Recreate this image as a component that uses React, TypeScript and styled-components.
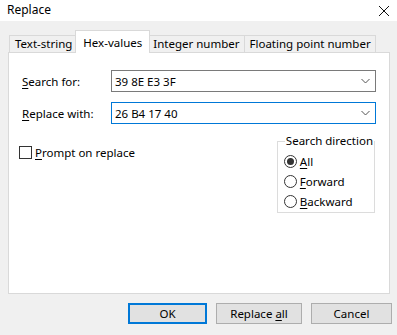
import React from 'react'
import styled, { createGlobalStyle } from 'styled-components'

const GlobalStyle = createGlobalStyle`
  html, body {
    margin: 0;
    padding: 0;
    background: #f0f0f0;
  }
  body {
    font-family: "Noto Sans", "Liberation Sans", sans-serif;
    font-size: 11.5px;
    color: #000;
  }
`

const tabs = ['Text-string', 'Hex-values', 'Integer number', 'Floating point number']

const Window = styled.div`
    width: 397px;
    height: 335px;
    display: flex;
    flex-direction: column;
    background: #f0f0f0;
    overflow: hidden;
`

const TitleBar = styled.div`
    height: 21px;
    background: #fff;
    display: flex;
    align-items: center;
    justify-content: space-between;
    padding: 0 7px 0 7px;
    box-sizing: border-box;
`

const Title = styled.span`
    font-size: 12px;
    line-height: 21px;
    margin-top: -2px;
`

const Body = styled.div`
    flex: 1;
    display: flex;
    flex-direction: column;
    padding: 10px 5px 10px 8px;
`

const TabStrip = styled.div`
    display: flex;
    align-items: flex-end;
    height: 22px;
    padding-left: 1px;
    position: relative;
    z-index: 1;
`

const Tab = styled.div<{ $active?: boolean }>`
    height: ${p => p.$active ? '23px' : '18px'};
    box-sizing: border-box;
    padding: ${p => p.$active ? '2px 7px 0 7px' : '0 4px 0 5px'};
    margin: ${p => p.$active ? '0 -2px 0 -2px' : '0 0 0 -1px'};
    border: 1px solid #d9d9d9;
    border-bottom: ${p => p.$active ? 'none' : '1px solid #d9d9d9'};
    background: ${p => p.$active ? '#fff' : '#f0f0f0'};
    position: relative;
    z-index: ${p => p.$active ? 2 : 1};
    display: flex;
    align-items: center;
    line-height: 16px;
    white-space: nowrap;
    &:first-child { margin-left: 0; }
`

const Panel = styled.div`
    width: 382px;
    height: 242px;
    box-sizing: border-box;
    background: #fff;
    border: 1px solid #d9d9d9;
    margin-top: -1px;
    padding: 17px 13px 0 13px;
    display: flex;
    flex-direction: column;
`

const FieldRow = styled.div`
    display: flex;
    align-items: center;
    height: 22px;
    margin-bottom: 10px;
`

const FieldLabel = styled.label`
    width: 89px;
    flex-shrink: 0;
`

const Combo = styled.div<{ $focused?: boolean }>`
    width: 265px;
    height: 22px;
    box-sizing: border-box;
    border: 1px solid ${p => p.$focused ? '#0078d7' : '#7a7a7a'};
    display: flex;
    align-items: center;
    justify-content: space-between;
    padding: 0 5px 0 3px;
    background: #fff;
`

const Key = styled.span`
    text-decoration: underline;
    text-underline-offset: 2px;
`

const Lower = styled.div`
    display: flex;
    justify-content: space-between;
    align-items: flex-start;
`

const CheckRow = styled.label`
    display: flex;
    align-items: center;
    height: 14px;
    margin-top: 11px;
    margin-left: -3px;
`

const CheckBox = styled.span`
    width: 13px;
    height: 13px;
    box-sizing: border-box;
    border: 1px solid #333;
    margin-right: 3px;
    background: #fff;
`

const Group = styled.fieldset`
    width: 96px;
    box-sizing: border-box;
    margin: 0 1px 0 0;
    padding: 5px 0 3px 6px;
    border: 1px solid #dcdcdc;
    display: flex;
    flex-direction: column;
    gap: 4px;
`

const Legend = styled.legend`
    padding: 0 1px;
    margin-left: 1px;
    line-height: 14px;
    white-space: nowrap;
`

const RadioRow = styled.label`
    display: flex;
    align-items: center;
    height: 16px;
`

const RadioCircle = styled.span<{ $checked?: boolean }>`
    width: 13px;
    height: 13px;
    box-sizing: border-box;
    border: 1px solid #333;
    border-radius: 50%;
    margin-right: 3px;
    display: flex;
    align-items: center;
    justify-content: center;
    &::after {
        content: '';
        display: ${p => p.$checked ? 'block' : 'none'};
        width: 7px;
        height: 7px;
        border-radius: 50%;
        background: #333;
    }
`

const ButtonRow = styled.div`
    display: flex;
    justify-content: flex-end;
    gap: 9px;
    margin-top: 9px;
`

const Button = styled.button<{ $primary?: boolean; $w: number }>`
    width: ${p => p.$w}px;
    height: 21px;
    box-sizing: border-box;
    font-family: inherit;
    font-size: 11.5px;
    color: #000;
    background: #e1e1e1;
    border: ${p => p.$primary ? '2px solid #0078d7' : '1px solid #adadad'};
    padding: 0;
    line-height: 16px;
`

const Chevron = () => (
    <svg width="9" height="6" viewBox="0 0 9 6">
        <path d="M0.5 1 L4.5 5 L8.5 1" fill="none" stroke="#555" strokeWidth="1" />
    </svg>
)

const CloseIcon = () => (
    <svg width="12" height="12" viewBox="0 0 12 12">
        <path d="M1 1 L11 11 M11 1 L1 11" stroke="#111" strokeWidth="1" />
    </svg>
)

const App: React.FC = () => {
    return (
        <Window>
            <GlobalStyle />
            <TitleBar>
                <Title>Replace</Title>
                <CloseIcon />
            </TitleBar>
            <Body>
                <TabStrip>
                    {tabs.map((t, i) => (
                        <Tab key={t} $active={i === 1}>{t}</Tab>
                    ))}
                </TabStrip>
                <Panel>
                    <FieldRow>
                        <FieldLabel><Key>S</Key>earch for:</FieldLabel>
                        <Combo>
                            <span>39 8E E3 3F</span>
                            <Chevron />
                        </Combo>
                    </FieldRow>
                    <FieldRow>
                        <FieldLabel><Key>R</Key>eplace with:</FieldLabel>
                        <Combo $focused>
                            <span>26 B4 17 40</span>
                            <Chevron />
                        </Combo>
                    </FieldRow>
                    <Lower>
                        <CheckRow>
                            <CheckBox />
                            <span><Key>P</Key>rompt on replace</span>
                        </CheckRow>
                        <Group>
                            <Legend>Search direction</Legend>
                            <RadioRow><RadioCircle $checked /><span><Key>A</Key>ll</span></RadioRow>
                            <RadioRow><RadioCircle /><span><Key>F</Key>orward</span></RadioRow>
                            <RadioRow><RadioCircle /><span><Key>B</Key>ackward</span></RadioRow>
                        </Group>
                    </Lower>
                </Panel>
                <ButtonRow>
                    <Button $primary $w={79}>OK</Button>
                    <Button $w={86}>Replace <Key>a</Key>ll</Button>
                    <Button $w={81}>Cancel</Button>
                </ButtonRow>
            </Body>
        </Window>
    )
}

export default App
